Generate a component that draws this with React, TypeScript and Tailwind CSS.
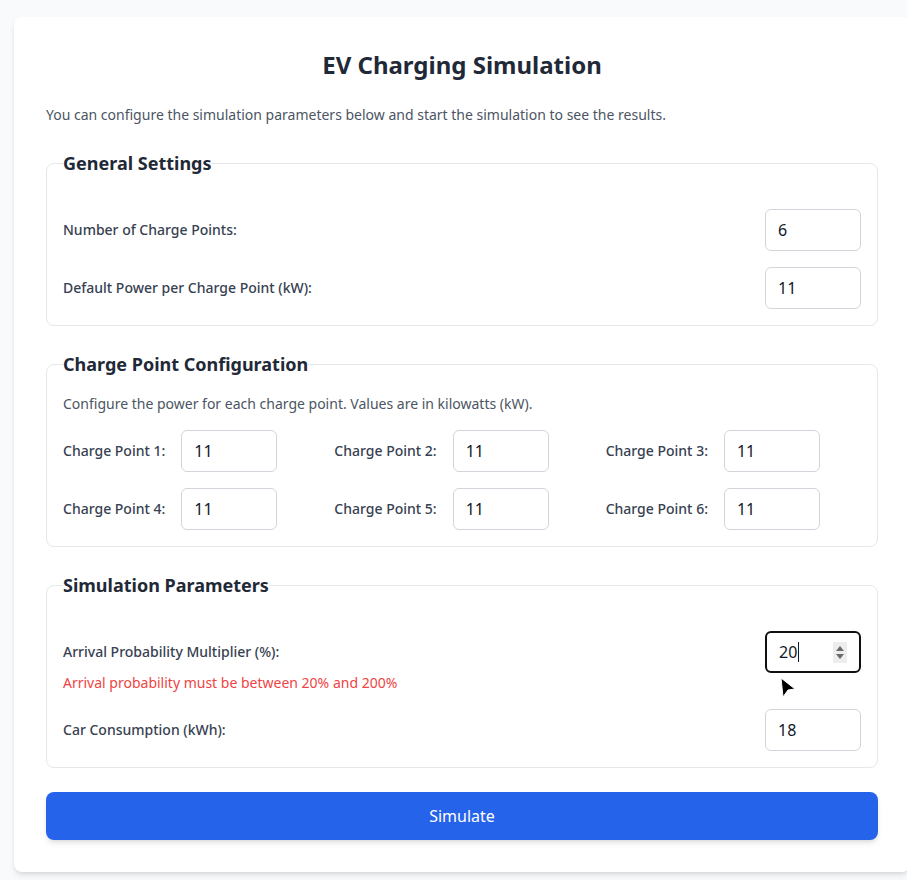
import React from "react";

const font = { fontFamily: '"Noto Sans", "Open Sans", sans-serif' };

function NumInput({ value }: { value: string }) {
  return (
    <input
      type="text"
      readOnly
      value={value}
      className="w-24 h-[42px] rounded-md border border-[#d1d5db] bg-white px-3 text-base text-[#111827] outline-none"
    />
  );
}

function Fieldset({ title, children }: { title: string; children: React.ReactNode }) {
  return (
    <fieldset className="rounded-lg border border-[#e5e7eb] px-4 pb-4">
      <legend className="text-lg font-bold leading-7 text-[#1f2937]">{title}</legend>
      {children}
    </fieldset>
  );
}

export default function App() {
  const points = [1, 2, 3, 4, 5, 6];
  return (
    <div className="min-h-[880px] w-full overflow-hidden bg-[#f9fafb] pl-[14px] pt-[17px]" style={font}>
      <div className="w-[896px] shrink-0 rounded-lg bg-white p-8 shadow-md">
        <h1 className="text-center text-2xl font-bold leading-8 text-[#1f2937]">EV Charging Simulation</h1>
        <p className="mt-6 text-sm leading-5 text-[#4b5563]">
          You can configure the simulation parameters below and start the simulation to see the results.
        </p>

        <div className="mt-6 flex flex-col gap-6">
          <Fieldset title="General Settings">
            <div className="flex flex-col gap-4 pt-8">
              <div className="flex items-center justify-between">
                <label className="text-sm font-medium text-[#374151]">Number of Charge Points:</label>
                <NumInput value="6" />
              </div>
              <div className="flex items-center justify-between">
                <label className="text-sm font-medium text-[#374151]">Default Power per Charge Point (kW):</label>
                <NumInput value="11" />
              </div>
            </div>
          </Fieldset>

          <Fieldset title="Charge Point Configuration">
            <p className="pt-4 text-sm leading-5 text-[#4b5563]">
              Configure the power for each charge point. Values are in kilowatts (kW).
            </p>
            <div className="mt-4 grid grid-cols-3 gap-4">
              {points.map((p) => (
                <div key={p} className="flex items-center gap-4">
                  <label className="text-sm font-medium text-[#374151]">Charge Point {p}:</label>
                  <NumInput value="11" />
                </div>
              ))}
            </div>
          </Fieldset>

          <Fieldset title="Simulation Parameters">
            <div className="flex flex-col gap-4 pt-8">
              <div>
                <div className="flex items-center justify-between">
                  <label className="text-sm font-medium text-[#374151]">Arrival Probability Multiplier (%):</label>
                  <div className="relative flex h-[42px] w-24 items-center rounded-md border-2 border-[#101010] bg-white pl-[12px]">
                    <span className="text-base text-[#111827]">20</span>
                    <span className="ml-[1px] h-[20px] w-[1px] bg-[#111827]" />
                    <div className="absolute right-[12px] top-[9px] flex h-[21px] w-[14px] flex-col items-center justify-center gap-[3px] bg-[#ededed]">
                      <svg width="8" height="5" viewBox="0 0 8 5">
                        <path d="M4 0 L8 5 L0 5 Z" fill="#6b6b6b" />
                      </svg>
                      <svg width="8" height="5" viewBox="0 0 8 5">
                        <path d="M0 0 L8 0 L4 5 Z" fill="#6b6b6b" />
                      </svg>
                    </div>
                    <svg
                      className="absolute left-[12px] top-[44px]"
                      width="18"
                      height="22"
                      viewBox="0 0 18 22"
                    >
                      <path d="M2 1 L16 12 L9 13 L4 20 Z" fill="#000" stroke="#fff" strokeWidth="1" />
                    </svg>
                  </div>
                </div>
                <p className="text-sm leading-5 text-[#ef4444]">Arrival probability must be between 20% and 200%</p>
              </div>
              <div className="flex items-center justify-between">
                <label className="text-sm font-medium text-[#374151]">Car Consumption (kWh):</label>
                <NumInput value="18" />
              </div>
            </div>
          </Fieldset>
        </div>

        <button className="mt-6 h-12 w-full rounded-lg bg-[#2563eb] text-base text-white shadow-md">Simulate</button>
      </div>
    </div>
  );
}
